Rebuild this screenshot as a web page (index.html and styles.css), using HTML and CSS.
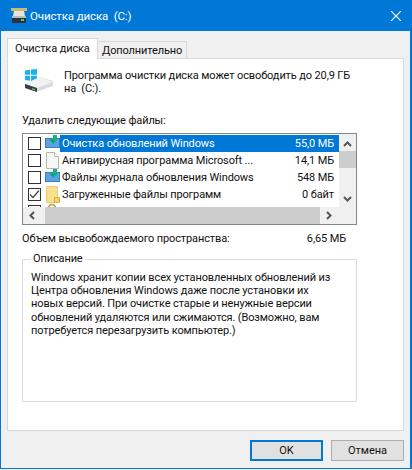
FILE: index.html
```html
<!DOCTYPE html>
<html lang="ru">
<head>
    <meta charset="UTF-8">
    <meta name="viewport" content="width=device-width, initial-scale=1.0">
    <title>Очистка диска (C:)</title>
    <link rel="stylesheet" href="styles.css">
</head>
<body>
    <svg class="sprites" width="0" height="0">
        <symbol id="update" viewBox="0 0 16 17">
            <rect x="0" y="3" width="15" height="10" fill="#3a80c4"/>
            <rect x="1" y="4" width="13" height="8" fill="#5aa2e2"/>
            <path d="M8 0 H12 V4 H13 L8.5 9 L4 4 H8 Z" fill="#17b07f"/>
            <path d="M5.5 5 H8.5 L8.5 8 Z" fill="#0e8f66"/>
        </symbol>
        <symbol id="file" viewBox="0 0 16 17">
            <path d="M1.5 .5 H9.5 L13.5 4.5 V16.5 H1.5 Z" fill="#f7f7f7" stroke="#b5b5b5"/>
            <path d="M9.5 .5 V4.5 H13.5" fill="#fff" stroke="#b5b5b5"/>
        </symbol>
        <symbol id="folder" viewBox="0 0 16 17">
            <path d="M1.5 .5 H12.5 V16.5 H1.5 Z" fill="#f8e08e" stroke="#e8cd75"/>
            <path d="M9.5 11.5 H14.5 V16.5 H9.5 Z" fill="#f5d470" stroke="#dcae3c"/>
        </symbol>
    </svg>

    <div class="window">
        <header class="titlebar">
            <svg class="title-icon" width="18" height="16" viewBox="0 0 18 16">
                <path d="M1 0 H17 V3 H1 Z" fill="#cdb878"/>
                <path d="M4 3 H14 L15 8 H3 Z" fill="#e8e4d8"/>
                <rect x="2" y="8" width="14" height="7" rx="1" fill="#2e3236"/>
                <rect x="2" y="8" width="14" height="2" fill="#b9bcbd"/>
                <rect x="11" y="11" width="3" height="2" fill="#37d66a"/>
            </svg>
            <span class="title-text">Очистка диска &nbsp;(C:)</span>
            <svg class="close" width="10" height="10" viewBox="0 0 10 10">
                <path d="M0 0 L10 10 M10 0 L0 10" stroke="#fff" stroke-width="1.1"/>
            </svg>
        </header>

        <div class="client">
            <div class="tabs">
                <div class="tab active">Очистка диска</div>
                <div class="tab">Дополнительно</div>
            </div>

            <div class="panel">
                <div class="summary">
                    <svg class="drive" width="30" height="23" viewBox="0 0 30 23">
                        <path d="M1 1.5 L6 .8 V5.8 H1 Z M7 .6 L13 0 V5.8 H7 Z M1 6.8 H6 V11.8 L1 11 Z M7 6.8 H13 V12.8 L7 12 Z" fill="#19b2ee"/>
                        <path d="M1 15 L16 8 L29 12 L29 17 L12 23 L1 19 Z" fill="#d9dadb"/>
                        <path d="M1 15 L13 19 L29 13 L16 8 Z" fill="#f1f1f1"/>
                        <path d="M1 15 L13 19 V23 L1 19 Z" fill="#3a3f42"/>
                        <path d="M8 19 L11 20 V21.5 L8 20.5 Z" fill="#3fc55f"/>
                    </svg>
                    <p class="summary-text">Программа очистки диска может освободить до 20,9 ГБ<br>на &nbsp;(C:).</p>
                </div>

                <div class="list-label">Удалить следующие файлы:</div>
                <div class="listbox">
                    <div class="list-top">
                        <div class="rows">
                            <div class="row selected">
                                <span class="check"></span>
                                <svg class="row-icon" width="16" height="17"><use href="#update"/></svg>
                                <span class="row-name">Очистка обновлений Windows</span>
                                <span class="row-size">55,0 МБ</span>
                            </div>
                            <div class="row">
                                <span class="check"></span>
                                <svg class="row-icon" width="16" height="17"><use href="#file"/></svg>
                                <span class="row-name">Антивирусная программа Microsoft ...</span>
                                <span class="row-size">14,1 МБ</span>
                            </div>
                            <div class="row">
                                <span class="check"></span>
                                <svg class="row-icon" width="16" height="17"><use href="#update"/></svg>
                                <span class="row-name">Файлы журнала обновления Windows</span>
                                <span class="row-size">548 МБ</span>
                            </div>
                            <div class="row">
                                <span class="check checked">
                                    <svg width="11" height="11" viewBox="0 0 11 11"><path d="M1 5.5 L4 8.5 L10 1.5" fill="none" stroke="#444" stroke-width="1.2"/></svg>
                                </span>
                                <svg class="row-icon" width="16" height="17"><use href="#folder"/></svg>
                                <span class="row-name">Загруженные файлы программ</span>
                                <span class="row-size">0 байт</span>
                            </div>
                            <div class="row">
                                <span class="check"></span>
                                <svg class="row-icon" width="16" height="17" viewBox="0 0 16 17"><circle cx="7" cy="5" r="3.5" fill="none" stroke="#b59a52" stroke-width="1.5"/></svg>
                            </div>
                        </div>
                        <div class="vscroll">
                            <svg class="arrow" width="9" height="6" viewBox="0 0 9 6"><path d="M1 5 L4.5 1.5 L8 5" fill="none" stroke="#555" stroke-width="2"/></svg>
                            <div class="vtrack"><div class="vthumb"></div></div>
                            <svg class="arrow" width="9" height="6" viewBox="0 0 9 6"><path d="M1 1 L4.5 4.5 L8 1" fill="none" stroke="#555" stroke-width="2"/></svg>
                        </div>
                    </div>
                    <div class="hscroll">
                        <svg class="arrow-h" width="6" height="9" viewBox="0 0 6 9"><path d="M5 1 L1.5 4.5 L5 8" fill="none" stroke="#555" stroke-width="2"/></svg>
                        <div class="hthumb"></div>
                        <svg class="arrow-h" width="6" height="9" viewBox="0 0 6 9"><path d="M1 1 L4.5 4.5 L1 8" fill="none" stroke="#555" stroke-width="2"/></svg>
                    </div>
                </div>

                <div class="total">
                    <span>Объем высвобождаемого пространства:</span>
                    <span>6,65 МБ</span>
                </div>

                <fieldset class="description">
                    <legend>Описание</legend>
                    <p>Windows хранит копии всех установленных обновлений из<br>Центра обновления Windows даже после установки их<br>новых версий. При очистке старые и ненужные версии<br>обновлений удаляются или сжимаются. (Возможно, вам<br>потребуется перезагрузить компьютер.)</p>
                </fieldset>
            </div>

            <div class="buttons">
                <button class="btn default">OK</button>
                <button class="btn">Отмена</button>
            </div>
        </div>
    </div>
</body>
</html>
```

FILE: styles.css
```css
* {
    box-sizing: border-box;
}
html, body {
    margin: 0;
    height: 100%;
}
body {
    font-family: "Roboto", "Noto Sans", sans-serif;
    font-size: 11px;
    letter-spacing: -0.12px;
    color: #111;
    background: #f0f0f0;
    overflow: hidden;
}
.sprites {
    display: block;
    height: 0;
}
.window {
    display: flex;
    flex-direction: column;
    height: 469px;
    border: 1px solid #0078d7;
    border-width: 1px 2px 1px 1px;
}
.titlebar {
    display: flex;
    align-items: center;
    height: 30px;
    flex: none;
    padding: 0 9px 0 9px;
    background: #0078d7;
    color: #fff;
    font-size: 11.5px;
}
.title-icon {
    margin-right: 2px;
}
.title-text {
    flex: 1;
}
.client {
    flex: 1;
    display: flex;
    flex-direction: column;
    padding: 7px 6px 0 6px;
}
.tabs {
    display: flex;
    align-items: flex-end;
    height: 21px;
    position: relative;
    z-index: 1;
}
.tab {
    height: 18px;
    padding: 0 4px;
    line-height: 17px;
    white-space: nowrap;
    border: 1px solid #d9d9d9;
    border-bottom: 1px solid #d9d9d9;
    margin-left: -1px;
    background: #f0f0f0;
}
.tab:first-child {
    margin-left: 0;
}
.tab.active {
    height: 21px;
    width: 91px;
    padding: 1px 0 0 7px;
    background: #fff;
    border-bottom: 1px solid #fff;
}
.panel {
    height: 373px;
    margin-top: -1px;
    padding: 9px 46px 0 14px;
    background: #fff;
    border: 1px solid #d9d9d9;
}
.summary {
    display: flex;
    height: 40px;
}
.drive {
    flex: none;
    margin: 1px 10px 0 2px;
}
.summary-text {
    margin: 0;
    line-height: 13px;
    padding-top: 1px;
    width: 300px;
}
.list-label {
    margin-top: 5px;
    line-height: 16px;
}
.listbox {
    width: 335px;
    height: 92px;
    margin-top: 4px;
    border: 1px solid #82878c;
    display: flex;
    flex-direction: column;
}
.list-top {
    display: flex;
    height: 73px;
}
.rows {
    flex: 1;
    padding-top: 1px;
    overflow: hidden;
    background: #fff;
}
.row {
    display: flex;
    align-items: center;
    height: 17px;
    padding-left: 5px;
}
.check {
    flex: none;
    width: 13px;
    height: 13px;
    border: 1px solid #333;
    background: #fff;
    display: flex;
    align-items: center;
    justify-content: center;
}
.row-icon {
    flex: none;
    margin: 0 -1px 0 4px;
}
.row-name {
    flex: 1;
    height: 17px;
    line-height: 17px;
    padding-left: 2px;
    white-space: nowrap;
}
.row-size {
    height: 17px;
    line-height: 17px;
    padding-right: 5px;
}
.row.selected .row-name,
.row.selected .row-size {
    background: #0078d7;
    color: #fff;
}
.vscroll {
    width: 17px;
    flex: none;
    display: flex;
    flex-direction: column;
    align-items: center;
    background: #f0f0f0;
    padding: 7px 0 5px;
}
.vtrack {
    flex: 1;
    width: 100%;
    padding-top: 4px;
}
.vthumb {
    height: 17px;
    background: #cdcdcd;
}
.hscroll {
    height: 17px;
    flex: none;
    display: flex;
    align-items: center;
    background: #f0f0f0;
}
.arrow-h {
    flex: none;
    margin: 0 6px;
}
.arrow-h:last-child {
    margin: 0 24px 0 6px;
}
.hthumb {
    flex: 1;
    align-self: stretch;
    margin-left: 4px;
    background: #cdcdcd;
}
.total {
    display: flex;
    justify-content: space-between;
    width: 324px;
    margin-top: 7px;
    line-height: 14px;
}
.description {
    width: 335px;
    height: 150px;
    margin: 6px 0 0;
    padding: 5px 7px 0 8px;
    border: 1px solid #dcdcdc;
}
.description legend {
    padding: 0 2px;
    line-height: 14px;
}
.description p {
    margin: 0;
    line-height: 13.2px;
}
.buttons {
    display: flex;
    justify-content: flex-end;
    gap: 8px;
    margin-top: 9px;
    padding-right: 0;
}
.btn {
    width: 73px;
    height: 21px;
    padding: 0;
    font: inherit;
    color: #111;
    background: #e1e1e1;
    border: 1px solid #adadad;
}
.btn.default {
    border: 2px solid #0078d7;
}
```
